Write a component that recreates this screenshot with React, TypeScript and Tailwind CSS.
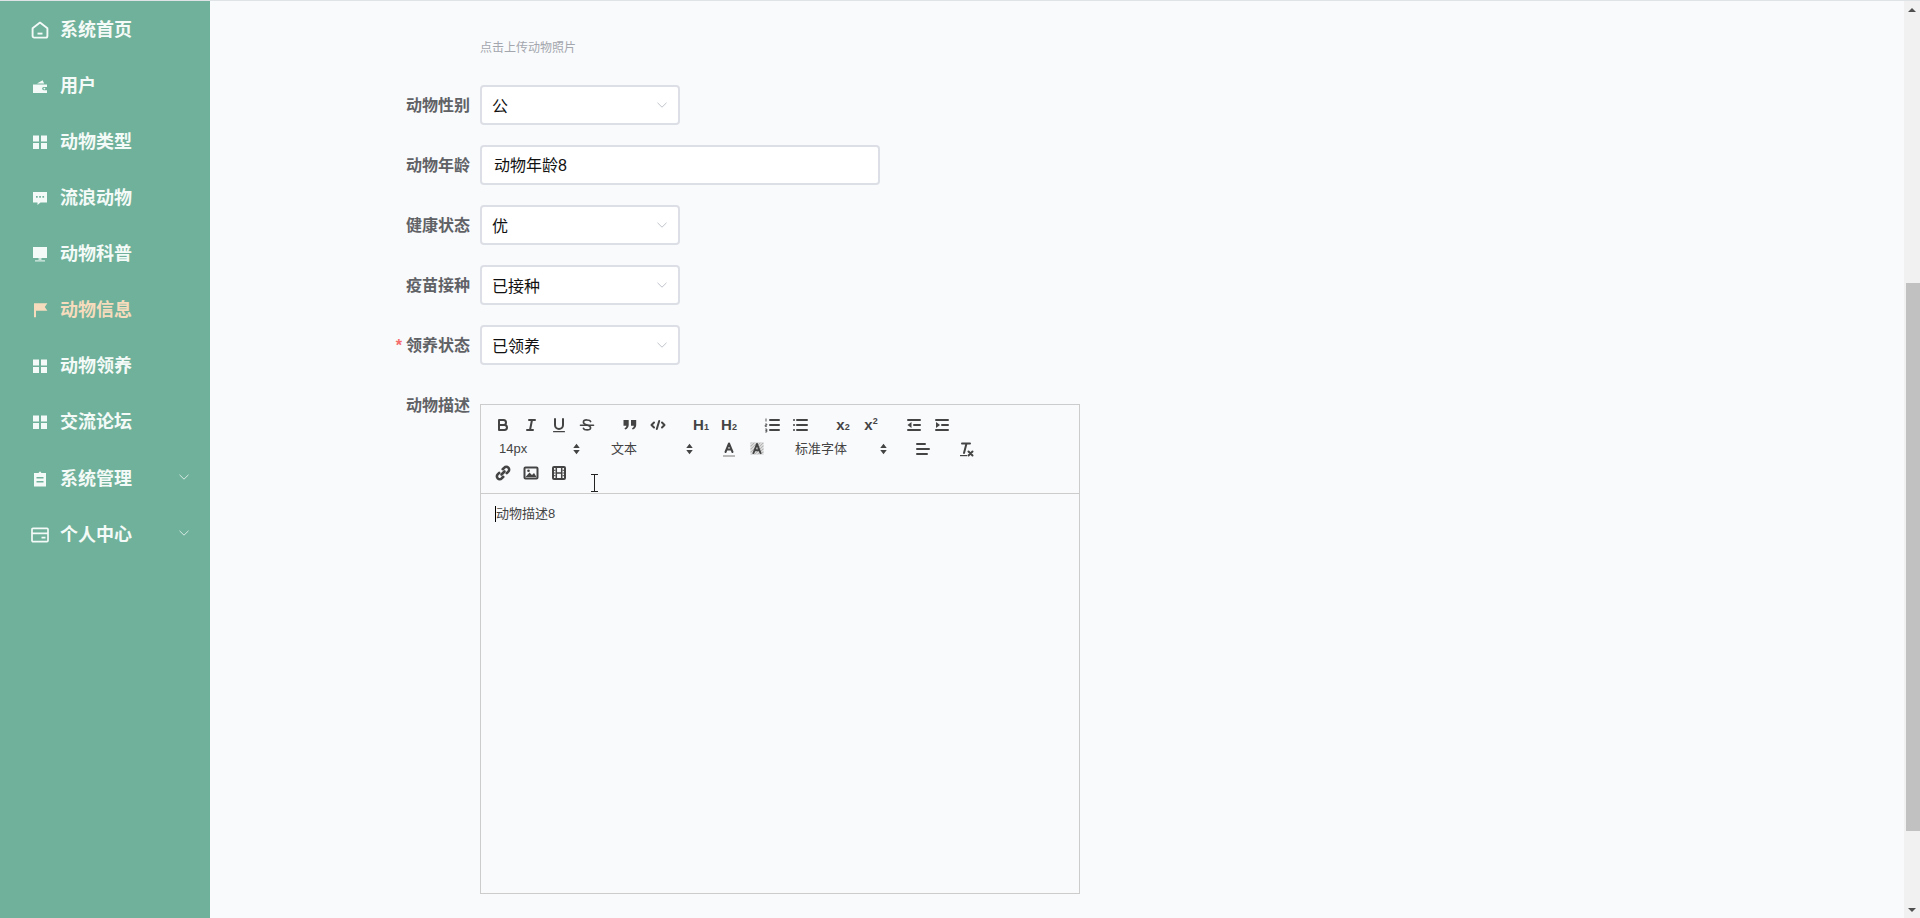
import React from 'react';

const cjk = "font-['Liberation_Sans','Noto_Sans_CJK_SC',sans-serif]";

type IconProps = { className?: string };

// sidebar icons, drawn to match the element-ui glyphs
const HomeIcon = ({ className }: IconProps) => (
  <svg viewBox="0 0 18 18" className={className} fill="none" stroke="currentColor" strokeWidth="1.9">
    <path d="M9 1.6 16.4 7.2V15a1.6 1.6 0 0 1-1.6 1.6H3.2A1.6 1.6 0 0 1 1.6 15V7.2Z" strokeLinejoin="round" />
    <path d="M6.5 12.6h5" />
  </svg>
);
const WalletIcon = ({ className }: IconProps) => (
  <svg viewBox="0 0 18 18" className={className} fill="currentColor">
    <path d="M2 7.5h14v2.4h-3.2a1.7 1.7 0 0 0 0 3.4H16V16H2Z" />
    <path d="M6 6.6 11.6 3.2 13.2 6.6Z" />
    <circle cx="13.4" cy="11.6" r=".9" />
  </svg>
);
const GridIcon = ({ className }: IconProps) => (
  <svg viewBox="0 0 18 18" className={className} fill="currentColor">
    <rect x="2" y="2.5" width="6" height="6" />
    <rect x="10" y="2.5" width="6" height="6" />
    <rect x="2" y="10" width="6" height="6" />
    <rect x="10" y="10" width="6" height="6" />
  </svg>
);
const ChatIcon = ({ className }: IconProps) => (
  <svg viewBox="0 0 18 18" className={className}>
    <path fill="currentColor" d="M2 3h14v10.5H9.5L6.5 16v-2.5H2Z" />
    <g fill="#6fb19a">
      <rect x="5" y="7" width="1.7" height="1.7" />
      <rect x="8.2" y="7" width="1.7" height="1.7" />
      <rect x="11.4" y="7" width="1.7" height="1.7" />
    </g>
  </svg>
);
const MonitorIcon = ({ className }: IconProps) => (
  <svg viewBox="0 0 18 18" className={className} fill="currentColor">
    <rect x="2" y="2" width="14" height="11" />
    <rect x="7.5" y="13" width="3" height="2" opacity=".7" />
    <rect x="4" y="15.4" width="10" height="1" />
  </svg>
);
const FlagIcon = ({ className }: IconProps) => (
  <svg viewBox="0 0 18 18" className={className} fill="currentColor">
    <path d="M3 2.2h2v14H3Z" />
    <path d="M5 2.2H16.4l-2.6 3.8 2.6 3.8H5Z" />
  </svg>
);
const DocIcon = ({ className }: IconProps) => (
  <svg viewBox="0 0 18 18" className={className}>
    <path fill="currentColor" d="M3 3h4.5l1.5-1.8L10.5 3H15v13.5H3Z" />
    <rect x="5.5" y="7" width="7" height="1.5" fill="#6fb19a" />
    <rect x="5.5" y="11" width="7" height="1.5" fill="#6fb19a" />
  </svg>
);
const CardIcon = ({ className }: IconProps) => (
  <svg viewBox="0 0 18 18" className={className} fill="none" stroke="currentColor" strokeWidth="1.7">
    <rect x="1" y="2.4" width="16" height="13.2" rx="1" />
    <path d="M1 7.4h16M10.5 11.6h4" />
  </svg>
);
const Chevron = ({ className }: IconProps) => (
  <svg viewBox="0 0 12 12" className={className} fill="none" stroke="currentColor" strokeWidth="1">
    <path d="M1.5 3.8 6 8.2l4.5-4.4" />
  </svg>
);

const navItems = [
  { label: '系统首页', Icon: HomeIcon },
  { label: '用户', Icon: WalletIcon },
  { label: '动物类型', Icon: GridIcon },
  { label: '流浪动物', Icon: ChatIcon },
  { label: '动物科普', Icon: MonitorIcon },
  { label: '动物信息', Icon: FlagIcon, active: true },
  { label: '动物领养', Icon: GridIcon },
  { label: '交流论坛', Icon: GridIcon },
  { label: '系统管理', Icon: DocIcon, sub: true, first: true },
  { label: '个人中心', Icon: CardIcon, sub: true },
];

function Sidebar() {
  return (
    <aside className="w-[210px] shrink-0 bg-[#6fb19a] pt-px">
      {navItems.map(({ label, Icon, active, sub, first }) => (
        <div
          key={label}
          className={`flex h-14 items-center pl-[31px] text-[18px] font-bold ${first ? 'mt-px' : ''} ${active ? 'text-[#f6dcbd]' : 'text-[#f4faf7]'}`}
        >
          <Icon className="mr-[11px] h-[18px] w-[18px]" />
          <span>{label}</span>
          {sub && <Chevron className="ml-[46px] -mt-1 h-3 w-3 opacity-80" />}
        </div>
      ))}
    </aside>
  );
}

function FormRow({ label, required, children }: { label: string; required?: boolean; children: React.ReactNode }) {
  return (
    <div className="mb-5 flex h-10 items-center">
      <label className="w-[270px] shrink-0 pr-2.5 pt-0.5 text-right text-[16px] font-bold text-[#606266]">
        {required && <span className="mr-1 text-[#f56c6c]">*</span>}
        {label}
      </label>
      {children}
    </div>
  );
}

function SelectBox({ value }: { value: string }) {
  return (
    <div className="flex h-10 w-[200px] items-center justify-between rounded border-2 border-[#dcdfe6] bg-white pl-[10px] pr-[10px] text-[16px] text-[#111]">
      <span className="pt-1">{value}</span>
      <Chevron className="h-3 w-3 text-[#c0c4cc]" />
    </div>
  );
}

// quill toolbar icons
const stroke = { fill: 'none', stroke: '#444', strokeWidth: 2, strokeLinecap: 'round', strokeLinejoin: 'round' } as const;
const thin = { ...stroke, strokeWidth: 1.6 };

const tools: Record<string, React.ReactNode> = {
  bold: (
    <g {...stroke}>
      <path d="M5 4h4.5a2.5 2.5 0 0 1 0 5H5Z" />
      <path d="M5 9h5.5a2.5 2.5 0 0 1 0 5H5Z" />
    </g>
  ),
  italic: (
    <g {...stroke}>
      <path d="M7 4h6M5 14h6M8 14l2-10" />
    </g>
  ),
  underline: (
    <g>
      <path {...stroke} d="M5 3v6a4 4 0 0 0 8 0V3" />
      <rect x="3" y="15" width="12" height="1.2" rx=".5" fill="#444" />
    </g>
  ),
  strike: (
    <g {...thin}>
      <path d="M2.5 9.3h13" />
      <path d="M12.6 5.6C12 3.6 5.6 3 5.4 6c-.1 1.5 1.4 2.4 3.6 3 2.2.6 3.8 1.4 3.6 3-.3 2.6-6.4 2.4-7.2.2" />
    </g>
  ),
  quote: (
    <g fill="#444">
      <path d="M2.5 4h5.2v5c0 2.2-1.3 3.9-3.6 4.6l-.6-1.4c1.2-.5 1.8-1.2 1.9-2.4H2.5Z" />
      <path d="M10 4h5.2v5c0 2.2-1.3 3.9-3.6 4.6l-.6-1.4c1.2-.5 1.8-1.2 1.9-2.4H10Z" />
    </g>
  ),
  code: (
    <g {...stroke}>
      <path d="M5 6.5 2.5 9 5 11.5M13 6.5 15.5 9 13 11.5M10.2 5 7.8 13" />
    </g>
  ),
  ol: (
    <g>
      <path {...stroke} d="M7 4h9M7 9h9M7 14h9" />
      <path stroke="#444" strokeWidth=".9" d="M3 2.5v3M2.2 8h1.6v1.2H2.2v1.2h1.6M2.2 13h1.6v3H2.2M2.4 14.5h1.4" fill="none" />
    </g>
  ),
  ul: (
    <g>
      <path {...stroke} d="M6 4h10M6 9h10M6 14h10" />
      <path stroke="#444" strokeWidth="2" strokeLinecap="round" d="M3 4h.01M3 9h.01M3 14h.01" />
    </g>
  ),
  outdent: (
    <g>
      <path {...stroke} d="M3 4h12M3 14h12M9 9h6" />
      <path d="M6.5 6v6L2.5 9Z" fill="#444" />
    </g>
  ),
  indent: (
    <g>
      <path {...stroke} d="M3 4h12M3 14h12M9 9h6" />
      <path d="M3 6v6L7 9Z" fill="#444" />
    </g>
  ),
  color: (
    <g>
      <rect x="3" y="15" width="12" height="2" fill="#b9b9b9" />
      <path {...stroke} d="M5.5 12 9 3.5 12.5 12M6.7 9.4h4.6" />
    </g>
  ),
  background: (
    <g>
      <rect x="2.5" y="2.5" width="13" height="12" fill="#b5b5b5" />
      <path stroke="#fff" strokeWidth="1" d="M2.5 5l2.5-2.5M2.5 8l5.5-5.5M2.5 11l8.5-8.5M2.5 14l11.5-11.5M5 14.5l10.5-10.5M8 14.5l7.5-7.5M11 14.5l4.5-4.5M14 14.5l1.5-1.5" />
      <path {...stroke} d="M5.5 13 9 4l3.5 9M6.7 10.2h4.6" />
    </g>
  ),
  align: (
    <g {...stroke}>
      <path d="M3 4h8M3 9h12M3 14h10" />
    </g>
  ),
  clean: (
    <g>
      <path {...stroke} d="M5 3.5h8M9.5 3.5 7 13" />
      <rect x="3" y="15" width="7" height="1.2" fill="#444" />
      <path {...stroke} d="M11.5 11.5l4 4M15.5 11.5l-4 4" />
    </g>
  ),
  link: (
    <g fill="none" stroke="#444" strokeWidth="2.6" strokeLinecap="round" strokeLinejoin="round">
      <path d="M7.5 10.5 10.5 7.5" />
      <path d="M8.7 5.2 10.3 3.700a2.800 2.800 0 0 1 4 4l-1.500 1.500" />
      <path d="M9.300 12.800 7.700 14.300a2.800 2.800 0 0 1-4-4l1.500-1.500" />
    </g>
  ),
  image: (
    <g>
      <rect x="2.500" y="3.500" width="13" height="11" rx="1" {...stroke} />
      <path d="M3.500 13 7.500 8.500l2.500 2.500 2-2 2.500 4Z" fill="#444" />
      <circle cx="6.500" cy="6.800" r="1.300" fill="#444" />
    </g>
  ),
  video: (
    <g>
      <rect x="3" y="3" width="12" height="12" rx="1" {...stroke} />
      <path stroke="#444" strokeWidth="1.500" d="M6.300 3.500v11M11.700 3.500v11M6.300 9h5.400" />
      <path stroke="#444" strokeWidth="1" d="M3.500 6.300h2M3.500 9h2M3.500 11.700h2M12.500 6.300h2M12.500 9h2M12.500 11.700h2" />
    </g>
  ),
};

function ToolIcon({ name }: { name: string }) {
  return (
    <span className="flex h-6 w-7 items-center justify-center">
      <svg viewBox="0 0 18 18" className="h-[18px] w-[18px]">
        {tools[name]}
      </svg>
    </span>
  );
}

function TextTool({ main, small, up }: { main: string; small: string; up?: boolean }) {
  return (
    <span className="flex h-6 w-7 items-baseline justify-center pt-[3px] font-['Liberation_Sans',sans-serif] text-[#444]">
      <span className="text-[15px] font-bold leading-[18px]">{main}</span>
      <span className={`text-[9px] font-bold leading-none ${up ? '-translate-y-[6px]' : ''}`}>{small}</span>
    </span>
  );
}

function Picker({ label, className }: { label: string; className: string }) {
  return (
    <span className={`mr-[15px] flex h-6 items-center justify-between pr-[7px] text-[13px] text-[#444] ${className}`}>
      <span>{label}</span>
      <svg viewBox="0 0 8 14" className="h-[12px] w-[7px]" fill="#444">
        <path d="M4 1 7.800 5.800H.2ZM4 13 .2 8.200h7.600Z" />
      </svg>
    </span>
  );
}

function Editor() {
  return (
    <div className="mt-[19px] flex h-[490px] w-[600px] flex-col border border-[#ccc]">
      <div className="h-[89px] border-b border-[#ccc] p-2">
        <div className="flex">
          <div className="mr-[15px] flex">
            <ToolIcon name="bold" />
            <ToolIcon name="italic" />
            <ToolIcon name="underline" />
            <ToolIcon name="strike" />
          </div>
          <div className="mr-[15px] flex">
            <ToolIcon name="quote" />
            <ToolIcon name="code" />
          </div>
          <div className="mr-[15px] flex">
            <TextTool main="H" small="1" />
            <TextTool main="H" small="2" />
          </div>
          <div className="mr-[15px] flex">
            <ToolIcon name="ol" />
            <ToolIcon name="ul" />
          </div>
          <div className="mr-[15px] flex">
            <TextTool main="x" small="2" />
            <TextTool main="x" small="2" up />
          </div>
          <div className="flex">
            <ToolIcon name="outdent" />
            <ToolIcon name="indent" />
          </div>
        </div>
        <div className="flex">
          <Picker label="14px" className="w-[98px] pl-[10px]" />
          <Picker label="文本" className="w-[98px] pl-[9px]" />
          <div className="mr-[15px] flex">
            <ToolIcon name="color" />
            <ToolIcon name="background" />
          </div>
          <Picker label="标准字体" className="w-[108px] pl-[9px]" />
          <div className="mr-[15px] flex">
            <ToolIcon name="align" />
          </div>
          <ToolIcon name="clean" />
        </div>
        <div className="flex">
          <ToolIcon name="link" />
          <ToolIcon name="image" />
          <ToolIcon name="video" />
        </div>
      </div>
      <div className="px-[15px] py-3 text-[13px] leading-[20px] text-[#444]">
        <p className="-ml-px w-fit border-l border-black leading-[16px]">动物描述8</p>
      </div>
    </div>
  );
}

function Scrollbar() {
  return (
    <div className="flex w-4 shrink-0 flex-col items-center bg-[#f1f1f1]">
      <div className="flex h-[17px] items-center justify-center">
        <div className="h-0 w-0 border-x-[4px] border-b-[4px] border-x-transparent border-b-[#505050]" />
      </div>
      <div className="ml-[2px] mt-[265px] h-[548px] w-[14px] bg-[#c1c1c1]" />
      <div className="mt-auto flex h-[17px] items-center justify-center">
        <div className="h-0 w-0 border-x-[4px] border-t-[4px] border-x-transparent border-t-[#505050]" />
      </div>
    </div>
  );
}

export default function App() {
  return (
    <div className={`relative flex h-[918px] w-full overflow-hidden border-t border-[#dfe3e6] bg-[#f9fafc] ${cjk}`}>
      <Sidebar />
      <main className="min-w-0 flex-1 pt-[38px]">
        <div className="mb-[28px] h-[18px] pl-[270px] text-[12px] leading-[18px] text-[#a3a6ad]">点击上传动物照片</div>
        <FormRow label="动物性别">
          <SelectBox value="公" />
        </FormRow>
        <FormRow label="动物年龄">
          <div className="flex h-10 w-[400px] items-center rounded border-2 border-[#dcdfe6] bg-white pl-3 text-[16px] text-[#111]">
            <span className="pt-0.5">动物年龄8</span>
          </div>
        </FormRow>
        <FormRow label="健康状态">
          <SelectBox value="优" />
        </FormRow>
        <FormRow label="疫苗接种">
          <SelectBox value="已接种" />
        </FormRow>
        <FormRow label="领养状态" required>
          <SelectBox value="已领养" />
        </FormRow>
        <FormRow label="动物描述">
          <div className="h-10 self-start">
            <Editor />
          </div>
        </FormRow>
      </main>
      <Scrollbar />
      {/* mouse cursor caught by the screenshot */}
      <svg viewBox="0 0 9 18" className="absolute left-[590px] top-[473px] h-[18px] w-[9px]" fill="none" stroke="#222" strokeWidth="1">
        <path d="M1 .5h7M4.500.5v17M1 17.500h7" />
      </svg>
    </div>
  );
}
